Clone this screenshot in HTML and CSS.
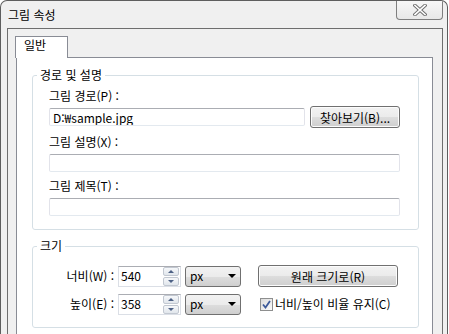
FILE: index.html
```html
<!DOCTYPE html>
<html lang="ko">
<head>
    <meta charset="UTF-8">
    <title>그림 속성</title>
    <link rel="stylesheet" href="styles.css">
</head>
<body>
    <div class="window">
        <div class="titlebar">
            <span class="title">그림 속성</span>
            <button class="close" type="button">
                <svg width="14" height="12" viewBox="0 0 14 12">
                    <path d="M2 1.5 L12 10.5 M12 1.5 L2 10.5" stroke="#6f6f6f" stroke-width="3.6" stroke-linecap="square"/>
                    <path d="M2 1.5 L12 10.5 M12 1.5 L2 10.5" stroke="#ffffff" stroke-width="1.6" stroke-linecap="square"/>
                </svg>
            </button>
        </div>
        <div class="client">
            <div class="tabs">
                <div class="tab">일반</div>
            </div>
            <div class="page">
                <fieldset class="group">
                    <legend>경로 및 설명</legend>
                    <label class="field-label first" for="path">그림 경로(P) :</label>
                    <div class="path-row">
                        <input class="textbox path-box" type="text" id="path" value="D:₩sample.jpg">
                        <button class="btn browse" type="button">찾아보기(B)...</button>
                    </div>
                    <label class="field-label" for="desc">그림 설명(X) :</label>
                    <input class="textbox" type="text" id="desc">
                    <label class="field-label" for="caption">그림 제목(T) :</label>
                    <input class="textbox" type="text" id="caption">
                </fieldset>

                <fieldset class="group size-group">
                    <legend>크기</legend>
                    <div class="size-row">
                        <label class="size-label">너비(W) :</label>
                        <div class="spin">
                            <span class="spin-value">540</span>
                            <div class="spin-buttons">
                                <span class="spin-btn"><i class="arrow-up"></i></span>
                                <span class="spin-btn"><i class="arrow-down"></i></span>
                            </div>
                        </div>
                        <div class="select"><span>px</span><i class="select-arrow"></i></div>
                        <button class="btn reset" type="button">원래 크기로(R)</button>
                    </div>
                    <div class="size-row">
                        <label class="size-label">높이(E) :</label>
                        <div class="spin">
                            <span class="spin-value">358</span>
                            <div class="spin-buttons">
                                <span class="spin-btn"><i class="arrow-up"></i></span>
                                <span class="spin-btn"><i class="arrow-down"></i></span>
                            </div>
                        </div>
                        <div class="select"><span>px</span><i class="select-arrow"></i></div>
                        <label class="check">
                            <span class="checkbox">
                                <svg width="9" height="9" viewBox="0 0 9 9">
                                    <path d="M1 4.5 L3.5 7.5 L8 1" fill="none" stroke="#3c5a9a" stroke-width="1.8"/>
                                </svg>
                            </span>
                            너비/높이 비율 유지(C)
                        </label>
                    </div>
                </fieldset>
            </div>
        </div>
    </div>
</body>
</html>
```

FILE: styles.css
```css
* {
    box-sizing: border-box;
}
body {
    margin: 0;
    background: #fff;
    font-family: "Noto Sans CJK KR", "Noto Sans", sans-serif;
    font-size: 12px;
    color: #000;
}
.window {
    width: 448px;
    height: 334px;
    overflow: hidden;
    border: 1px solid #5e5e5e;
    border-bottom: none;
    border-radius: 7px 7px 0 0;
    background: #f0f0f0;
    padding: 0 4px 0 6px;
    display: flex;
    flex-direction: column;
}
.titlebar {
    height: 27px;
    flex: none;
    display: flex;
    justify-content: space-between;
    align-items: flex-start;
}
.title {
    padding: 7px 0 0 1px;
    line-height: 14px;
}
.close {
    width: 47px;
    height: 20px;
    margin-top: -1px;
    padding: 0;
    border: 1px solid #7f7f7f;
    border-top: none;
    border-radius: 0 0 4px 4px;
    background: linear-gradient(#f8f8f8, #e8e8e8);
    display: flex;
    align-items: center;
    justify-content: center;
}
.client {
    flex: 1;
    border: 1px solid #6e6e6e;
    border-bottom: none;
    background: #f0f0f0;
    padding: 7px 0 0 7px;
    display: flex;
    flex-direction: column;
}
.tabs {
    display: flex;
}
.tab {
    position: relative;
    z-index: 1;
    width: 53px;
    height: 22px;
    margin-bottom: -1px;
    border: 1px solid #898c95;
    border-bottom: none;
    background: #fff;
    padding: 1px 0 0 8px;
    line-height: 14px;
}
.page {
    flex: 1;
    width: 417px;
    margin-left: 1px;
    border: 1px solid #898c95;
    border-bottom: none;
    background: #fff;
    padding: 10px 0 0 15px;
}
.group {
    width: 387px;
    margin: 0;
    border: 1px solid #d5dfe5;
    border-radius: 3px;
    padding: 0 18px 13px 16px;
}
.group legend {
    margin-left: -12px;
    padding: 0 3px;
    line-height: 14px;
}
.field-label {
    display: block;
    line-height: 14px;
    margin-top: 7px;
}
.path-row {
    display: flex;
    align-items: center;
    gap: 5px;
    height: 22px;
    margin-top: 3px;
}
.textbox {
    display: block;
    width: 100%;
    height: 18px;
    margin: 5px 0 0 0;
    padding: 0 3px;
    border: 1px solid #e2e3ea;
    border-top-color: #abadb3;
    border-bottom-color: #e3e9ef;
    border-radius: 2px;
    font: inherit;
    color: #000;
    background: #fff;
}
.path-row .textbox {
    width: 256px;
    margin: 0;
}
.btn {
    height: 22px;
    padding: 0;
    border: 1px solid #707070;
    border-radius: 3px;
    background: linear-gradient(#f2f2f2 0%, #ebebeb 50%, #dddddd 51%, #cfcfcf 100%);
    font: inherit;
    color: #000;
    box-shadow: inset 0 0 0 1px #fcfcfc;
}
.browse {
    width: 90px;
}
.size-group {
    margin-top: 9px;
    padding-bottom: 12px;
}
.size-row {
    display: flex;
    align-items: center;
    height: 22px;
    margin-top: 6px;
}
.size-row:first-of-type {
    margin-top: 12px;
}
.size-label {
    width: 65px;
    margin-right: 4px;
    text-align: right;
    line-height: 14px;
}
.spin {
    width: 63px;
    height: 21px;
    display: flex;
    justify-content: space-between;
    border: 1px solid #dbdfe6;
    border-top-color: #abadb3;
    background: #fff;
}
.spin-value {
    padding: 2px 0 0 2px;
    line-height: 14px;
}
.spin-buttons {
    width: 17px;
    display: flex;
    flex-direction: column;
    gap: 1px;
    padding: 0 1px 0 0;
}
.spin-btn {
    flex: 1;
    border: 1px solid #c2c8d1;
    border-radius: 2px;
    background: linear-gradient(#f6f8fa, #e1e6ec);
    display: flex;
    align-items: center;
    justify-content: center;
}
.arrow-up, .arrow-down {
    width: 0;
    height: 0;
    border-left: 3px solid transparent;
    border-right: 3px solid transparent;
}
.arrow-up {
    border-bottom: 3px solid #4d6185;
}
.arrow-down {
    border-top: 3px solid #4d6185;
}
.select {
    width: 56px;
    height: 21px;
    margin-left: 4px;
    border: 1px solid #707070;
    border-radius: 3px;
    background: linear-gradient(#f2f2f2 0%, #ebebeb 50%, #dddddd 51%, #cfcfcf 100%);
    display: flex;
    align-items: center;
    justify-content: space-between;
    padding: 0 4px 0 4px;
    line-height: 14px;
}
.select-arrow {
    width: 0;
    height: 0;
    border-left: 4px solid transparent;
    border-right: 4px solid transparent;
    border-top: 4px solid #000;
}
.reset {
    width: 140px;
    margin-left: 17px;
}
.check {
    margin-left: 19px;
    display: flex;
    align-items: center;
    gap: 2px;
    line-height: 14px;
}
.checkbox {
    width: 13px;
    height: 13px;
    border: 1px solid #8e8f8f;
    background: linear-gradient(135deg, #dcdcdc, #fbfbfb);
    display: flex;
    align-items: center;
    justify-content: center;
}
```
